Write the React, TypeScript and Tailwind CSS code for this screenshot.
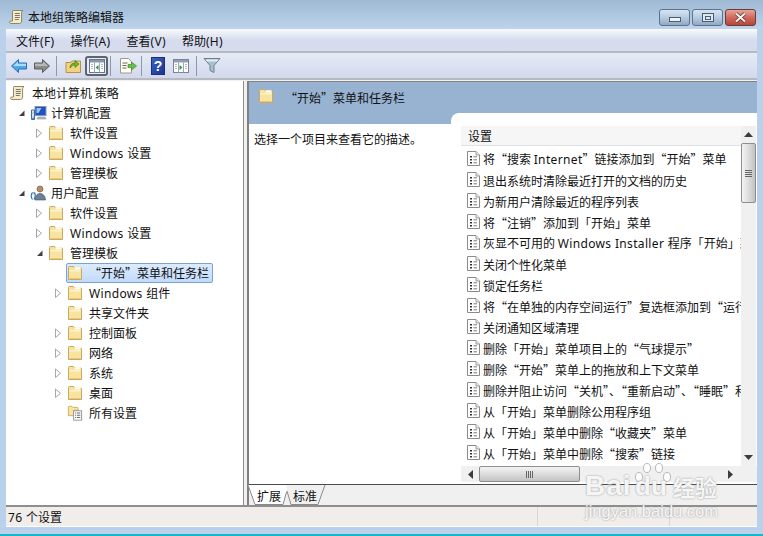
import React from "react";

const FONT = "font-['Noto_Sans_CJK_SC','Noto_Sans',sans-serif]";

function T({ s }: { s: string }) {
  const parts = s.split(/([A-Za-z0-9()]+(?: [A-Za-z0-9()]+)* ?)/);
  return (
    <>
      {parts.map((p, i) =>
        /[A-Za-z0-9]/.test(p) ? (
          <span key={i} className="font-['Noto_Sans',sans-serif] tracking-[0.35px]">{p}</span>
        ) : (
          <span key={i}>{p}</span>
        )
      )}
    </>
  );
}

function Folder() {
  return (
    <svg width="16" height="16" viewBox="0 0 16 16" className="shrink-0">
      <path d="M1.500 14.500V2.500a1 1 0 0 1 1-1h4l1 1.500h6a1 1 0 0 1 1 1v10.500z" fill="#f9e3a0" stroke="#c9a95e" />
      <path d="M2.500 5h11v1.500h-11z" fill="#fdf3c8" />
      <path d="M7.500 2.200h6v2.200h-6z" fill="#fffdf0" />
      <path d="M2.500 13.500h11" stroke="#e8c878" />
    </svg>
  );
}

function Scroll({ size = 16 }: { size?: number }) {
  return (
    <svg width={size} height={size} viewBox="0 0 16 16" className="shrink-0">
      <path d="M4 1.500h10c-1 .6-1.400 1.400-1.400 2.500v8c0 1.600-1 2.500-2.200 2.500H2c-1 0-1.500-.6-1.500-1.500 0-.6.6-1 1.400-1h1.600V3c0-1 .2-1.500.5-1.500z" fill="#f4eccb" stroke="#8a7d58" strokeWidth="0.9" />
      <path d="M5.800 4.500h5M5.800 6.500h5M5.800 8.500h5M5.800 10.500h4" stroke="#6a6a60" strokeWidth="0.9" />
    </svg>
  );
}

function Computer() {
  return (
    <svg width="17" height="16" viewBox="0 0 17 16" className="shrink-0">
      <rect x="5" y="1.500" width="11" height="9" fill="#1f50c8" stroke="#8b98a8" />
      <path d="M6.500 3h5l-3 5h-2z" fill="#9cc6f2" />
      <path d="M8 12h7l1 2H7z" fill="#b4bcc6" stroke="#88929e" strokeWidth="0.6" />
      <path d="M1.500 5h3v9.500h-3z" fill="#dbe3ec" stroke="#3f6c9c" />
      <path d="M2 8c-1 2-1 4 .5 6M4 7c1 2 .7 5-.5 7" stroke="#2f74b8" fill="none" />
    </svg>
  );
}

function Users() {
  return (
    <svg width="17" height="16" viewBox="0 0 17 16" className="shrink-0">
      <circle cx="10" cy="4" r="3" fill="#b98c63" stroke="#6f5237" strokeWidth="0.6" />
      <path d="M5 15c0-4 2-6.500 5-6.500s5.500 2.500 5.500 6.500z" fill="#6c7f96" stroke="#47566a" strokeWidth="0.6" />
      <path d="M2 8c-1 2-1 4.500 .5 6.500M4.500 7.500c1 2 .7 5-.5 7" stroke="#2f74b8" fill="none" strokeWidth="1.200" />
      <path d="M2 7.500h2.500v1.500H2z" fill="#dbe3ec" stroke="#3f6c9c" strokeWidth="0.5" />
    </svg>
  );
}

function AllSettings() {
  return (
    <svg width="16" height="18" viewBox="0 0 18 18" className="shrink-0">
      <path d="M1.500 12V2.500a1 1 0 0 1 1-1h3l1 1.200h5a1 1 0 0 1 1 1V6H7.500v6z" fill="#f9e3a0" stroke="#c9a95e" />
      <rect x="7.500" y="6.500" width="9" height="10.500" fill="#fff" stroke="#8e8e8e" />
      <path d="M9 9h1M11 9h4M9 11.500h1M11 11.500h4M9 14h1M11 14h4" stroke="#555" />
    </svg>
  );
}

function PolicyIcon() {
  return (
    <svg width="13" height="15" viewBox="0 0 13 15" className="shrink-0">
      <path d="M.5.5h8.500l3.500 3.500v10.500H.500z" fill="#fff" stroke="#8b8b8b" />
      <path d="M9 .5V4h3.500" fill="#eee" stroke="#9a9a9a" />
      <path d="M3 5h2v1.500H3zM3 8h2v1.500H3zM3 11h2v1.500H3z" fill="#333" />
      <path d="M6.500 5.800h3.500M6.500 8.800h3.500M6.500 11.800h3.500" stroke="#777" />
    </svg>
  );
}

function Open() {
  return (
    <svg width="9" height="10" viewBox="0 0 9 10" className="shrink-0">
      <path d="M7.500 2.500v5.500H2z" fill="#404040" />
    </svg>
  );
}

function Closed() {
  return (
    <svg width="9" height="11" viewBox="0 0 9 11" className="shrink-0">
      <path d="M1.500 1v8.500l5-4.250z" fill="#fff" stroke="#a6a6a6" />
    </svg>
  );
}

type TreeItem = { level: 0 | 1 | 2 | 3; exp?: "o" | "c"; icon: React.ReactNode; label: string; sel?: boolean };

const tree: TreeItem[] = [
  { level: 0, icon: <Scroll />, label: "本地计算机 策略" },
  { level: 1, exp: "o", icon: <Computer />, label: "计算机配置" },
  { level: 2, exp: "c", icon: <Folder />, label: "软件设置" },
  { level: 2, exp: "c", icon: <Folder />, label: "Windows 设置" },
  { level: 2, exp: "c", icon: <Folder />, label: "管理模板" },
  { level: 1, exp: "o", icon: <Users />, label: "用户配置" },
  { level: 2, exp: "c", icon: <Folder />, label: "软件设置" },
  { level: 2, exp: "c", icon: <Folder />, label: "Windows 设置" },
  { level: 2, exp: "o", icon: <Folder />, label: "管理模板" },
  { level: 3, icon: <Folder />, label: "“开始”菜单和任务栏", sel: true },
  { level: 3, exp: "c", icon: <Folder />, label: "Windows 组件" },
  { level: 3, icon: <Folder />, label: "共享文件夹" },
  { level: 3, exp: "c", icon: <Folder />, label: "控制面板" },
  { level: 3, exp: "c", icon: <Folder />, label: "网络" },
  { level: 3, exp: "c", icon: <Folder />, label: "系统" },
  { level: 3, exp: "c", icon: <Folder />, label: "桌面" },
  { level: 3, icon: <AllSettings />, label: "所有设置" },
];

const settings = [
  "将“搜索 Internet”链接添加到“开始”菜单",
  "退出系统时清除最近打开的文档的历史",
  "为新用户清除最近的程序列表",
  "将“注销”添加到「开始」菜单",
  "灰显不可用的 Windows Installer 程序「开始」菜单快捷方式",
  "关闭个性化菜单",
  "锁定任务栏",
  "将“在单独的内存空间运行”复选框添加到“运行”对话框",
  "关闭通知区域清理",
  "删除「开始」菜单项目上的“气球提示”",
  "删除“开始”菜单上的拖放和上下文菜单",
  "删除并阻止访问“关机”、“重新启动”、“睡眠”和“休眠”命令",
  "从「开始」菜单删除公用程序组",
  "从「开始」菜单中删除“收藏夹”菜单",
  "从「开始」菜单中删除“搜索”链接",
];

function TreeRow({ item }: { item: TreeItem }) {
  const indent = { 0: "pl-[4px]", 1: "pl-[11px]", 2: "pl-[29px]", 3: "pl-[48px]" }[item.level];
  const gap = { 0: "gap-[6px]", 1: "gap-[4px]", 2: "gap-[6px]", 3: "gap-[6px]" }[item.level];
  return (
    <div className={`flex h-[20px] items-center ${indent}`}>
      {item.level > 0 && (
        <div className="flex w-[13px] shrink-0 items-center">
          {item.exp === "o" && <Open />}
          {item.exp === "c" && <Closed />}
        </div>
      )}
      {item.sel ? (
        <div className="-ml-[1px] flex h-[20px] w-[147px] items-center gap-[6px] rounded-[2px] border border-[#7da2ce] bg-gradient-to-b from-[#dcebfc] to-[#c1dbfc]">
          {item.icon}
          <span className="whitespace-nowrap"><T s={item.label} /></span>
        </div>
      ) : (
        <div className={`flex items-center ${gap}`}>
          {item.icon}
          <span className="whitespace-nowrap"><T s={item.label} /></span>
        </div>
      )}
    </div>
  );
}

function WinButton({ kind }: { kind: "min" | "max" | "close" }) {
  const cls =
    kind === "close"
      ? "border-[#6b3a3a] bg-gradient-to-b from-[#e6a49a] via-[#cf6a5c] to-[#b8453a]"
      : "border-[#5f7388] bg-gradient-to-b from-[#d8e5f2] via-[#b5cbe2] to-[#8fa9c5]";
  return (
    <div className={`flex h-[17px] w-[31px] items-center justify-center rounded-[3px] border ${cls}`}>
      {kind === "min" && <div className="mt-[3px] h-[5px] w-[12px] border border-[#4b5d70] bg-white/80" />}
      {kind === "max" && (
        <div className="flex h-[9px] w-[12px] items-center justify-center border border-[#4b5d70] bg-[#dfe7ef]">
          <div className="h-[4px] w-[6px] border border-[#4b5d70]" />
        </div>
      )}
      {kind === "close" && (
        <svg width="13" height="11" viewBox="0 0 13 11">
          <path d="M2 1.500l9 8M11 1.500l-9 8" stroke="#4a2a2a" strokeWidth="3.400" />
          <path d="M2 1.500l9 8M11 1.500l-9 8" stroke="#f6f0ef" strokeWidth="2.200" />
        </svg>
      )}
    </div>
  );
}

function Toolbar() {
  const sep = "h-[20px] w-px shrink-0 bg-[#8f98a8]";
  return (
    <div className="flex h-[27px] items-center border-b-2 border-[#b7b9c0] bg-gradient-to-b from-[#e6ebf6] to-[#d3d9ec] pl-[4px]">
      <svg width="18" height="16" viewBox="0 0 18 16" className="shrink-0">
        <path d="M8.500 1.500L1.500 8l7 6.500V11h8V5h-8z" fill="#4da8e8" stroke="#2a6fb0" />
        <path d="M8 3.500L3 8h13V5.800H8z" fill="#a8dcfa" />
      </svg>
      <svg width="18" height="16" viewBox="0 0 18 16" className="ml-[5px] shrink-0">
        <path d="M9.500 1.500l7 6.500-7 6.500V11h-8V5h8z" fill="#8c8c8c" stroke="#5c5c5c" />
        <path d="M10 3.500L15 8H2V5.800h8z" fill="#b8b8b8" />
      </svg>
      <div className={`ml-[5px] ${sep}`} />
      <svg width="17" height="17" viewBox="0 0 17 17" className="ml-[8px] shrink-0">
        <path d="M1 15.500V5.500h5l1-1.500h8.500v11.500z" fill="#f3d27e" stroke="#b5934a" />
        <path d="M5 11c0-3 2-5 5-5V3.500l4 3.500-4 3.500V8c-2 0-3.500 1-5 3z" fill="#79b52f" stroke="#3f7a1a" strokeWidth="0.7" />
      </svg>
      <div className="ml-[3px] flex h-[20px] w-[23px] items-center justify-center rounded-[3px] border-2 border-[#5d6570] bg-[#e8ecf4]">
        <svg width="16" height="14" viewBox="0 0 16 14">
          <rect x="0.500" y="0.500" width="15" height="13" fill="#fff" stroke="#6a7482" />
          <path d="M1 1h14v2.500H1z" fill="#8798b0" />
          <path d="M5.500 3.500v10M10.500 3.500v10" stroke="#9aa5b5" />
          <path d="M9.500 6v5L6.500 8.500z" fill="#2e9a3c" />
          <path d="M2 5.500h2M2 7.500h2M2 9.500h2M12 5.500h2M12 7.500h2M12 9.500h2" stroke="#b0b8c4" />
        </svg>
      </div>
      <div className={`ml-[2px] ${sep}`} />
      <svg width="18" height="16" viewBox="0 0 18 16" className="ml-[8px] shrink-0">
        <path d="M1.500.500h8l3 3v11.500h-11z" fill="#fffdf3" stroke="#9a9a8a" />
        <path d="M3.500 5h5M3.500 7.500h4M3.500 10h4" stroke="#666" />
        <path d="M9 6.500h3.500V4L17.500 8l-5 4v-2.500H9z" fill="#63c04a" stroke="#3d8c2c" strokeWidth="0.7" />
      </svg>
      <div className={`ml-[4px] ${sep}`} />
      <div className="ml-[9px] flex h-[18px] w-[14px] items-center justify-center border border-[#1c2f78] bg-gradient-to-br from-[#3a62c8] to-[#1c3590] font-['Liberation_Sans'] text-[14px] font-bold leading-none text-white">?</div>
      <svg width="16" height="14" viewBox="0 0 16 14" className="ml-[8px] shrink-0">
        <rect x="0.500" y="0.500" width="15" height="13" fill="#fff" stroke="#7a8492" />
        <path d="M1 1h14v2.500H1z" fill="#8f9fb5" />
        <path d="M5.500 3.500v10M10.500 3.500v10" stroke="#9aa5b5" />
        <path d="M6.500 6v5l3-2.500z" fill="#2e9a3c" />
        <path d="M2 5.500h2M2 7.500h2M2 9.500h2M12 5.500h2M12 7.500h2M12 9.500h2" stroke="#b0b8c4" />
      </svg>
      <div className={`ml-[7px] ${sep}`} />
      <svg width="18" height="17" viewBox="0 0 18 17" className="ml-[6px] shrink-0">
        <path d="M1 1.500h16l-6 7v7l-4-2v-5z" fill="#a9c0d0" stroke="#6c8090" />
        <path d="M2.500 2.500h13l-1.500 2H4z" fill="#e4edf3" />
      </svg>
    </div>
  );
}

function Watermark() {
  return (
    <div className="pointer-events-none absolute left-[584px] top-[460px] h-[64px] w-[140px] font-['Liberation_Sans',sans-serif] text-white/90 [text-shadow:0_0_2px_#8a8a8a]">
      <div className="absolute left-[1px] top-[11px] text-[28px] font-bold leading-[30px] tracking-[1px]">Bai</div>
      <svg width="44" height="26" viewBox="0 0 44 26" className="absolute left-[48px] top-[2px]">
        <g fill="#ffffff" fillOpacity="0.85" stroke="#a8a8a8" strokeWidth="0.8">
          <ellipse cx="7" cy="15" rx="3.500" ry="4.500" />
          <ellipse cx="15" cy="6" rx="3.500" ry="4.500" />
          <ellipse cx="27" cy="6" rx="3.500" ry="4.500" />
          <ellipse cx="35" cy="15" rx="3.500" ry="4.500" />
        </g>
      </svg>
      <div className="absolute left-[51px] top-[11px] text-[26px] font-bold leading-[30px]">du</div>
      <div className="absolute left-[89px] top-[12px] whitespace-nowrap font-['Noto_Sans_CJK_SC',sans-serif] text-[22px] font-bold leading-[28px]">经验</div>
      <div className="absolute left-[1px] top-[40px] whitespace-nowrap text-[16.500px] leading-[22px]">jingyan.baidu.com</div>
    </div>
  );
}

export default function App() {
  return (
    <div className={`relative flex h-[536px] w-[763px] flex-col overflow-hidden bg-[#b9d1ea] text-[12px] leading-[16px] text-[#111] ${FONT}`}>
      <div className="flex h-[29px] shrink-0 items-center bg-gradient-to-b from-[#9fb9d4] to-[#bdd4eb] pl-[9px] pr-[7px] pt-[4px]">
        <Scroll />
        <span className="ml-[3px]">本地组策略编辑器</span>
        <div className="ml-auto mt-[2px] flex gap-[2px]">
          <WinButton kind="min" />
          <WinButton kind="max" />
          <WinButton kind="close" />
        </div>
      </div>

      <div className="mx-[6px] flex h-[498px] shrink-0 flex-col border-b border-white bg-[#f0f0f0]">
        <div className="flex h-[24px] shrink-0 items-center gap-[16px] border-b-2 border-[#b7b9c0] bg-gradient-to-b from-[#f8fafd] via-[#d6dcee] to-[#d6dcee] pl-[10px] pt-[2px]">
          <span><T s="文件(F)" /></span>
          <span><T s="操作(A)" /></span>
          <span><T s="查看(V)" /></span>
          <span><T s="帮助(H)" /></span>
        </div>
        <Toolbar />
        <div className="flex min-h-0 flex-1 pt-[1px]">
          <div className="flex w-[238px] shrink-0 flex-col overflow-hidden border-r border-[#8e8e8e] bg-white pt-[2px]">
            {tree.map((t, i) => (
              <TreeRow key={i} item={t} />
            ))}
          </div>
          <div className="w-[3px] shrink-0" />
          <div className="flex min-w-0 flex-1 flex-col border-l-2 border-t border-[#808080]">
            <div className="flex min-h-0 flex-1 flex-col bg-white">
              <div className="flex h-[42px] shrink-0 items-start bg-[#98b3d1] pl-[9px] pt-[6px]">
                <Folder />
                <span className="ml-[11px] mt-[2px]"><T s="“开始”菜单和任务栏" /></span>
              </div>
              <div className="flex min-h-0 flex-1">
                <div className="w-[202px] shrink-0 pl-[5px] pt-[7px]">选择一个项目来查看它的描述。</div>
                <div className="-mt-[11px] flex min-w-0 flex-1 flex-col overflow-hidden rounded-tl-[8px] bg-white pb-[2px] pl-[10px]">
                  <div className="flex min-h-0 flex-1 pt-[13px]">
                    <div className="min-w-0 flex-1 overflow-hidden">
                      <div className="flex h-[20px] items-center border-b border-[#dfe3e8] bg-[#f6f6f6] pl-[7px]">设置</div>
                      <div className="pt-[2px]">
                        {settings.map((s, i) => (
                          <div key={i} className="flex h-[21px] items-center gap-[3px] whitespace-nowrap pl-[6px]">
                            <PolicyIcon />
                            <span className="mt-[2px]"><T s={s} /></span>
                          </div>
                        ))}
                      </div>
                    </div>
                    <div className="mr-[1px] flex w-[15px] shrink-0 flex-col bg-[#f0f0f0]">
                      <div className="flex h-[17px] shrink-0 items-center justify-center">
                        <svg width="9" height="5" viewBox="0 0 9 5"><path d="M4.500 0L9 5H0z" fill="#3c3c3c" /></svg>
                      </div>
                      <div className="flex h-[60px] shrink-0 flex-col items-center justify-center gap-px rounded-[2px] border border-[#8e8e8e] bg-gradient-to-r from-[#f4f4f4] via-[#dcdcdc] to-[#c2c2c2]">
                        <div className="h-px w-[7px] bg-[#666]" />
                        <div className="h-px w-[7px] bg-[#666]" />
                        <div className="h-px w-[7px] bg-[#666]" />
                        <div className="h-px w-[7px] bg-[#666]" />
                      </div>
                      <div className="flex-1" />
                      <div className="flex h-[17px] shrink-0 items-center justify-center">
                        <svg width="9" height="5" viewBox="0 0 9 5"><path d="M0 0h9L4.500 5z" fill="#3c3c3c" /></svg>
                      </div>
                    </div>
                  </div>
                  <div className="flex h-[16px] shrink-0 items-center bg-[#f0f0f0]">
                    <div className="flex w-[18px] shrink-0 justify-center">
                      <svg width="5" height="9" viewBox="0 0 5 9"><path d="M5 0v9L0 4.500z" fill="#3c3c3c" /></svg>
                    </div>
                    <div className="flex h-[16px] w-[101px] shrink-0 items-center justify-center gap-px rounded-[2px] border border-[#8e8e8e] bg-gradient-to-b from-[#f4f4f4] via-[#dcdcdc] to-[#c2c2c2]">
                      <div className="h-[7px] w-px bg-[#666]" />
                      <div className="h-[7px] w-px bg-[#666]" />
                      <div className="h-[7px] w-px bg-[#666]" />
                      <div className="h-[7px] w-px bg-[#666]" />
                    </div>
                    <div className="ml-auto mr-[24px]">
                      <svg width="5" height="9" viewBox="0 0 5 9"><path d="M0 0v9l5-4.500z" fill="#3c3c3c" /></svg>
                    </div>
                  </div>
                </div>
              </div>
            </div>
            <div className="flex h-[21px] shrink-0 items-start border-t border-[#4a4a4a] bg-[#f0f0f0]">
              <div className="relative -ml-[2px] h-[20px] w-[39px] shrink-0">
                <svg width="41" height="20" viewBox="0 0 41 20" className="absolute inset-0">
                  <path d="M1 0L8 19.500H36L39.500 7V0z" fill="#ffffff" />
                  <path d="M1 0L8 19.500H36L39.500 7" fill="none" stroke="#8a8a8a" />
                </svg>
                <span className="absolute left-[10px] top-[3px]">扩展</span>
              </div>
              <div className="relative h-[20px] w-[40px] shrink-0">
                <svg width="40" height="20" viewBox="0 0 40 20" className="absolute inset-0">
                  <path d="M1 6L5 19.500H32L39 0" fill="none" stroke="#8a8a8a" />
                </svg>
                <span className="absolute left-[7px] top-[3px]">标准</span>
              </div>
            </div>
          </div>
        </div>
        <div className="flex h-[21px] shrink-0 items-center border-t-2 border-[#8e8e8e] bg-[#f0edeb]">
          <div className="flex h-full w-[532px] items-center border-r border-[#d8d5d3] pl-[2px] pt-[1px]">
            <span className="whitespace-pre"><T s="76 " />个设置</span>
          </div>
          <div className="h-full w-[132px] border-r border-[#d8d5d3]" />
        </div>
      </div>
      <div className="flex-1" />
      <div className="h-[2px] shrink-0 bg-[#16b5cf]" />
      <Watermark />
    </div>
  );
}
